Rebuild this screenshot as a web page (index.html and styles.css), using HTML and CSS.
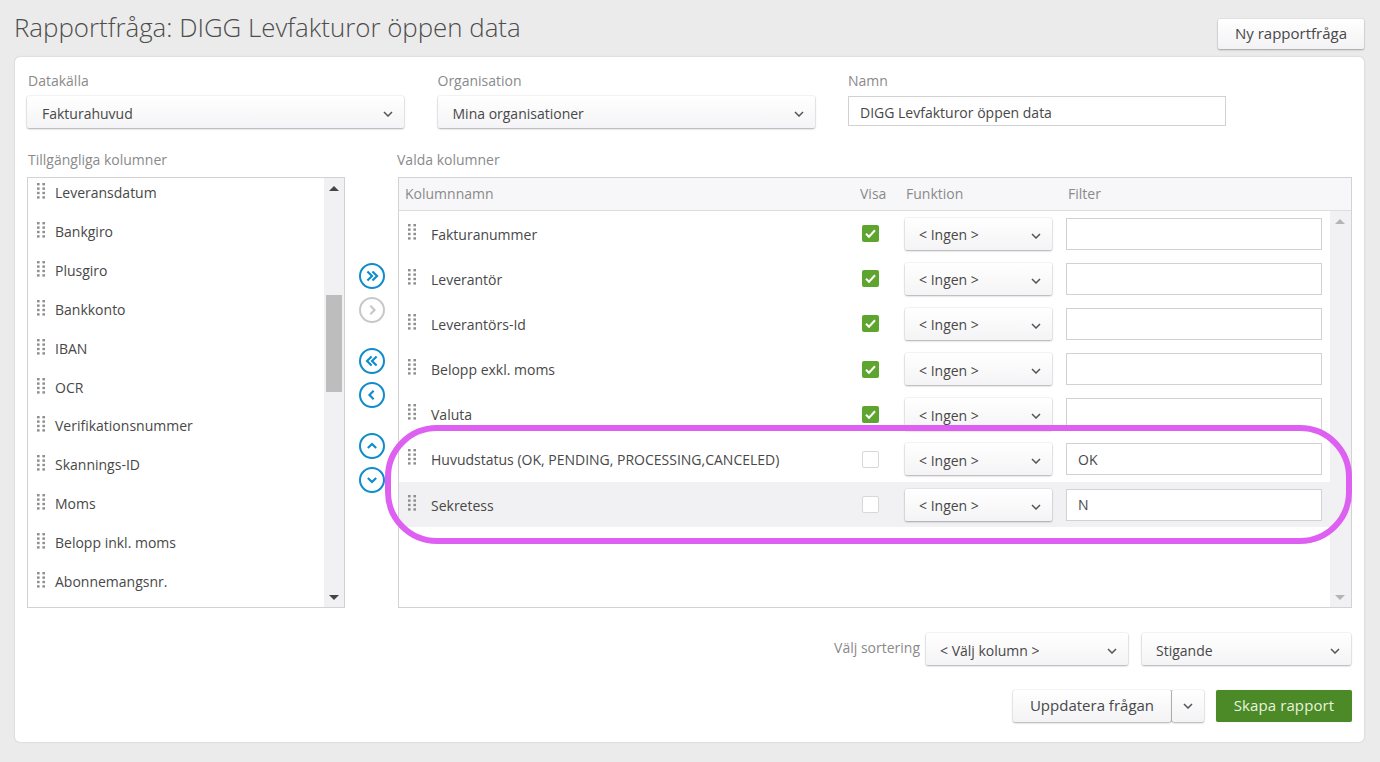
FILE: index.html
```html
<!DOCTYPE html>
<html lang="sv">
<head>
<meta charset="utf-8">
<title>Rapportfråga</title>
<link rel="stylesheet" href="styles.css">
</head>
<body>
<svg class="defs" width="0" height="0" aria-hidden="true">
  <symbol id="grip" viewBox="0 0 9 16"><g fill="#8f8f8f"><rect x="0" y="0" width="2.6" height="2.4"/><rect x="5.4" y="0" width="2.6" height="2.4"/><rect x="0" y="4.4" width="2.6" height="2.4"/><rect x="5.4" y="4.4" width="2.6" height="2.4"/><rect x="0" y="8.8" width="2.6" height="2.4"/><rect x="5.4" y="8.8" width="2.6" height="2.4"/><rect x="0" y="13.2" width="2.6" height="2.4"/><rect x="5.4" y="13.2" width="2.6" height="2.4"/></g></symbol>
  <symbol id="chev" viewBox="0 0 10 6"><path d="M1 1l4 4 4-4" fill="none" stroke="#555" stroke-width="1.5"/></symbol>
  <symbol id="tick" viewBox="0 0 17 17"><path d="M4 8.8l3 3 6-6.5" fill="none" stroke="#fff" stroke-width="2"/></symbol>
</svg>
<header class="top">
  <h1 class="title">Rapportfråga: DIGG Levfakturor öppen data</h1>
  <button class="btn new">Ny rapportfråga</button>
</header>
<main class="panel">
  <div class="fields">
    <div class="field"><label class="lbl">Datakälla</label><div class="select">Fakturahuvud<svg class="chev"><use href="#chev"/></svg></div></div>
    <div class="field"><label class="lbl">Organisation</label><div class="select">Mina organisationer<svg class="chev"><use href="#chev"/></svg></div></div>
    <div class="field"><label class="lbl">Namn</label><input class="input name" value="DIGG Levfakturor öppen data"></div>
  </div>
  <div class="columns">
    <section class="avail">
      <div class="lbl">Tillgängliga kolumner</div>
      <div class="listbox">
        <ul class="list">
          <li><svg class="grip"><use href="#grip"/></svg>Leveransdatum</li>
          <li><svg class="grip"><use href="#grip"/></svg>Bankgiro</li>
          <li><svg class="grip"><use href="#grip"/></svg>Plusgiro</li>
          <li><svg class="grip"><use href="#grip"/></svg>Bankkonto</li>
          <li><svg class="grip"><use href="#grip"/></svg>IBAN</li>
          <li><svg class="grip"><use href="#grip"/></svg>OCR</li>
          <li><svg class="grip"><use href="#grip"/></svg>Verifikationsnummer</li>
          <li><svg class="grip"><use href="#grip"/></svg>Skannings-ID</li>
          <li><svg class="grip"><use href="#grip"/></svg>Moms</li>
          <li><svg class="grip"><use href="#grip"/></svg>Belopp inkl. moms</li>
          <li><svg class="grip"><use href="#grip"/></svg>Abonnemangsnr.</li>
        </ul>
        <div class="scroll dark"><span class="up"></span><span class="thumb"></span><span class="down"></span></div>
      </div>
    </section>
    <nav class="moves">
      <div class="pair">
        <button class="round"><svg viewBox="0 0 24 24"><path d="M6.500 6.500l5.500 5.500-5.500 5.500M12.500 6.500l5.500 5.500-5.500 5.500"/></svg></button>
        <button class="round off"><svg viewBox="0 0 24 24"><path d="M10 7l5 5-5 5"/></svg></button>
      </div>
      <div class="pair">
        <button class="round"><svg viewBox="0 0 24 24"><path d="M11.500 6.500l-5.500 5.500 5.500 5.500M17.500 6.500l-5.500 5.500 5.500 5.500"/></svg></button>
        <button class="round"><svg viewBox="0 0 24 24"><path d="M14 7l-5 5 5 5"/></svg></button>
      </div>
      <div class="pair">
        <button class="round"><svg viewBox="0 0 24 24"><path d="M7 14.500l5-5 5 5"/></svg></button>
        <button class="round"><svg viewBox="0 0 24 24"><path d="M7 9.500l5 5 5-5"/></svg></button>
      </div>
    </nav>
    <section class="chosen">
      <div class="lbl">Valda kolumner</div>
      <div class="tablebox">
        <div class="thead"><span>Kolumnnamn</span><span>Visa</span><span>Funktion</span><span>Filter</span></div>
        <div class="tbody">
          <div class="rows">
            <div class="row"><svg class="grip"><use href="#grip"/></svg><span class="cname">Fakturanummer</span><span class="check on"><svg><use href="#tick"/></svg></span><div class="select small">&lt; Ingen &gt;<svg class="chev"><use href="#chev"/></svg></div><input class="input"></div>
            <div class="row"><svg class="grip"><use href="#grip"/></svg><span class="cname">Leverantör</span><span class="check on"><svg><use href="#tick"/></svg></span><div class="select small">&lt; Ingen &gt;<svg class="chev"><use href="#chev"/></svg></div><input class="input"></div>
            <div class="row"><svg class="grip"><use href="#grip"/></svg><span class="cname">Leverantörs-Id</span><span class="check on"><svg><use href="#tick"/></svg></span><div class="select small">&lt; Ingen &gt;<svg class="chev"><use href="#chev"/></svg></div><input class="input"></div>
            <div class="row"><svg class="grip"><use href="#grip"/></svg><span class="cname">Belopp exkl. moms</span><span class="check on"><svg><use href="#tick"/></svg></span><div class="select small">&lt; Ingen &gt;<svg class="chev"><use href="#chev"/></svg></div><input class="input"></div>
            <div class="row"><svg class="grip"><use href="#grip"/></svg><span class="cname">Valuta</span><span class="check on"><svg><use href="#tick"/></svg></span><div class="select small">&lt; Ingen &gt;<svg class="chev"><use href="#chev"/></svg></div><input class="input"></div>
            <div class="row"><svg class="grip"><use href="#grip"/></svg><span class="cname">Huvudstatus (OK, PENDING, PROCESSING,CANCELED)</span><span class="check"></span><div class="select small">&lt; Ingen &gt;<svg class="chev"><use href="#chev"/></svg></div><input class="input" value="OK"></div>
            <div class="row hover"><svg class="grip"><use href="#grip"/></svg><span class="cname">Sekretess</span><span class="check"></span><div class="select small">&lt; Ingen &gt;<svg class="chev"><use href="#chev"/></svg></div><input class="input" value="N"></div>
          </div>
          <div class="scroll wide"><span class="up"></span><span class="down"></span></div>
        </div>
        <div class="ring"></div>
      </div>
    </section>
  </div>
  <div class="sorting">
    <span class="lbl">Välj sortering</span>
    <div class="select col">&lt; Välj kolumn &gt;<svg class="chev"><use href="#chev"/></svg></div>
    <div class="select dir">Stigande<svg class="chev"><use href="#chev"/></svg></div>
  </div>
  <div class="actions">
    <div class="split"><button class="btn update">Uppdatera frågan</button><button class="btn more"><svg class="chev"><use href="#chev"/></svg></button></div>
    <button class="btn primary">Skapa rapport</button>
  </div>
</main>
</body>
</html>
```
FILE: styles.css
```css
* { box-sizing: border-box; }
html, body { margin: 0; height: 100%; }
body {
  background: #ebebeb;
  color: #484848;
  font: 14px/18px "Open Sans", "Liberation Sans", sans-serif;
  padding: 0 16px 0 15px;
  overflow: hidden;
}
.defs { position: absolute; }
.top { height: 57px; display: flex; justify-content: space-between; align-items: flex-start; }
.title { margin: 9px 0 0 -1px; font-size: 25.850px; line-height: 36px; font-weight: 300; color: #4d4d4d; }
.btn {
  font: inherit;
  color: #484848;
  height: 32px;
  background: linear-gradient(#fff, #f3f3f5);
  border: 0;
  border-radius: 2px;
  box-shadow: 0 0 1px rgba(0,0,0,.3), 0 1px 2px rgba(0,0,0,.3);
  padding: 0 0 2px;
}
.new { width: 146px; height: 30px; margin-top: 19px; font-size: 15px; }
.panel {
  height: 685px;
  background: #fff;
  border-radius: 5px;
  box-shadow: 0 0 2px rgba(0,0,0,.2);
  padding: 15px 12px 20px 12px;
}
.lbl { display: block; height: 18px; color: #8a8a8a; padding-left: 1px; }
.fields { display: flex; gap: 33.500px; }
.field { width: 377px; }
.field .lbl { margin-bottom: 6px; }
.field + .field .lbl { padding-left: 0; }
.select {
  position: relative;
  display: flex;
  align-items: center;
  height: 32px;
  padding: 3px 0 0 15px;
  background: linear-gradient(#fff, #f4f4f6);
  border-radius: 2px;
  box-shadow: 0 0 1px rgba(0,0,0,.35), 0 1px 2px rgba(0,0,0,.3);
  color: #484848;
}
.chev { width: 10px; height: 6px; flex: none; }
.select .chev { position: absolute; right: 11px; top: 15px; }
.input {
  display: block;
  width: 100%;
  height: 32px;
  border: 1px solid #d2d2d2;
  background: #fff;
  font: inherit;
  color: #484848;
  padding: 0 11px;
  outline: 0;
}
.name { margin-top: 1px; width: 378px; height: 30px; padding-top: 2px; }
.columns { display: grid; grid-template-columns: 318px 53px 954px; margin-top: 23px; }
.avail .lbl, .chosen .lbl { margin-bottom: 8px; }
.chosen .lbl { margin-left: -1px; padding-left: 0; }
.listbox {
  display: flex;
  height: 431px;
  border: 1px solid #d2d2d2;
  overflow: hidden;
}
.list { flex: 1; list-style: none; margin: 0; padding: 0; }
.list li { display: flex; align-items: center; height: 38.900px; padding-left: 9px; white-space: nowrap; position: relative; top: -4.400px; }
.grip { width: 9px; height: 16px; flex: none; margin-right: 9px; position: relative; top: -2px; }
.scroll {
  position: relative;
  flex: none;
  width: 20px;
  background: #f1f0f3;
}
.scroll.wide { width: 21px; }
.up, .down { position: absolute; left: 5px; width: 0; height: 0; border: 5px solid transparent; border-top-width: 0; border-bottom-width: 0; }
.up { top: 8px; border-bottom: 5px solid #b4b4b4; }
.down { bottom: 7px; border-top: 5px solid #b4b4b4; }
.dark .up { border-bottom-color: #444; }
.dark .down { border-top-color: #444; }
.thumb { position: absolute; left: 2px; top: 117px; width: 16px; height: 97px; background: #bdbdbd; }
.moves { display: flex; flex-direction: column; gap: 25px; padding: 112px 0 0 14px; }
.pair { display: flex; flex-direction: column; gap: 8px; }
.round {
  width: 26px;
  height: 26px;
  padding: 0;
  border: 2px solid #0e8ccb;
  border-radius: 50%;
  background: #fff;
  display: flex;
  align-items: center;
  justify-content: center;
}
.round svg { width: 20px; height: 20px; fill: none; stroke: #0e8ccb; stroke-width: 2.600; }
.round.off { border-color: #c8c8c8; }
.round.off svg { stroke: #c8c8c8; }
.tablebox { position: relative; height: 431px; border: 1px solid #d2d2d2; }
.thead {
  display: grid;
  grid-template-columns: 455px 46px 162px 1fr;
  align-items: center;
  height: 33px;
  padding-left: 6px;
  background: #f7f7f9;
  border-bottom: 1px solid #dedede;
  color: #8a8a8a;
}
.tbody { display: flex; height: 396px; }
.rows { flex: 1; }
.row {
  display: grid;
  grid-template-columns: 32px 431px 43px 161px 256px;
  align-items: center;
  height: 45.170px;
}
.row .grip { margin-left: 9px; }
.cname { padding-top: 2px; }
.row.hover { background: #f1f1f3; }
.check {
  display: block;
  width: 17px;
  height: 17px;
  border: 1px solid #d8d8d8;
  border-radius: 2px;
  background: #fff;
}
.check.on { border: 0; background: #5ea52f; }
.check svg { display: block; width: 17px; height: 17px; }
.small { width: 147px; padding-left: 14px; }
.ring {
  position: absolute;
  left: -14px;
  top: 247px;
  width: 967px;
  height: 119px;
  border: 6.500px solid #dd60f2;
  border-radius: 52px;
  pointer-events: none;
}
.sorting { display: flex; align-items: center; justify-content: flex-end; margin-top: 25px; height: 32px; padding-right: 1px; }
.sorting .lbl { margin-right: 6px; position: relative; top: -1px; }
.col { width: 202px; padding-left: 14px; }
.dir { width: 209px; margin-left: 14px; padding-left: 14px; }
.actions { display: flex; justify-content: flex-end; gap: 12px; margin-top: 25px; }
.split { display: flex; gap: 1px; background: #d8d8d8; border-radius: 2px; }
.update { width: 158px; font-size: 15px; }
.more { width: 32px; display: flex; align-items: center; justify-content: center; padding-top: 2px; }
.primary {
  width: 136px;
  background: #4b8a26;
  color: #e9f3df;
  font-size: 15px;
  letter-spacing: .1px;
  box-shadow: 0 0 1px rgba(0,0,0,.3);
}
```
